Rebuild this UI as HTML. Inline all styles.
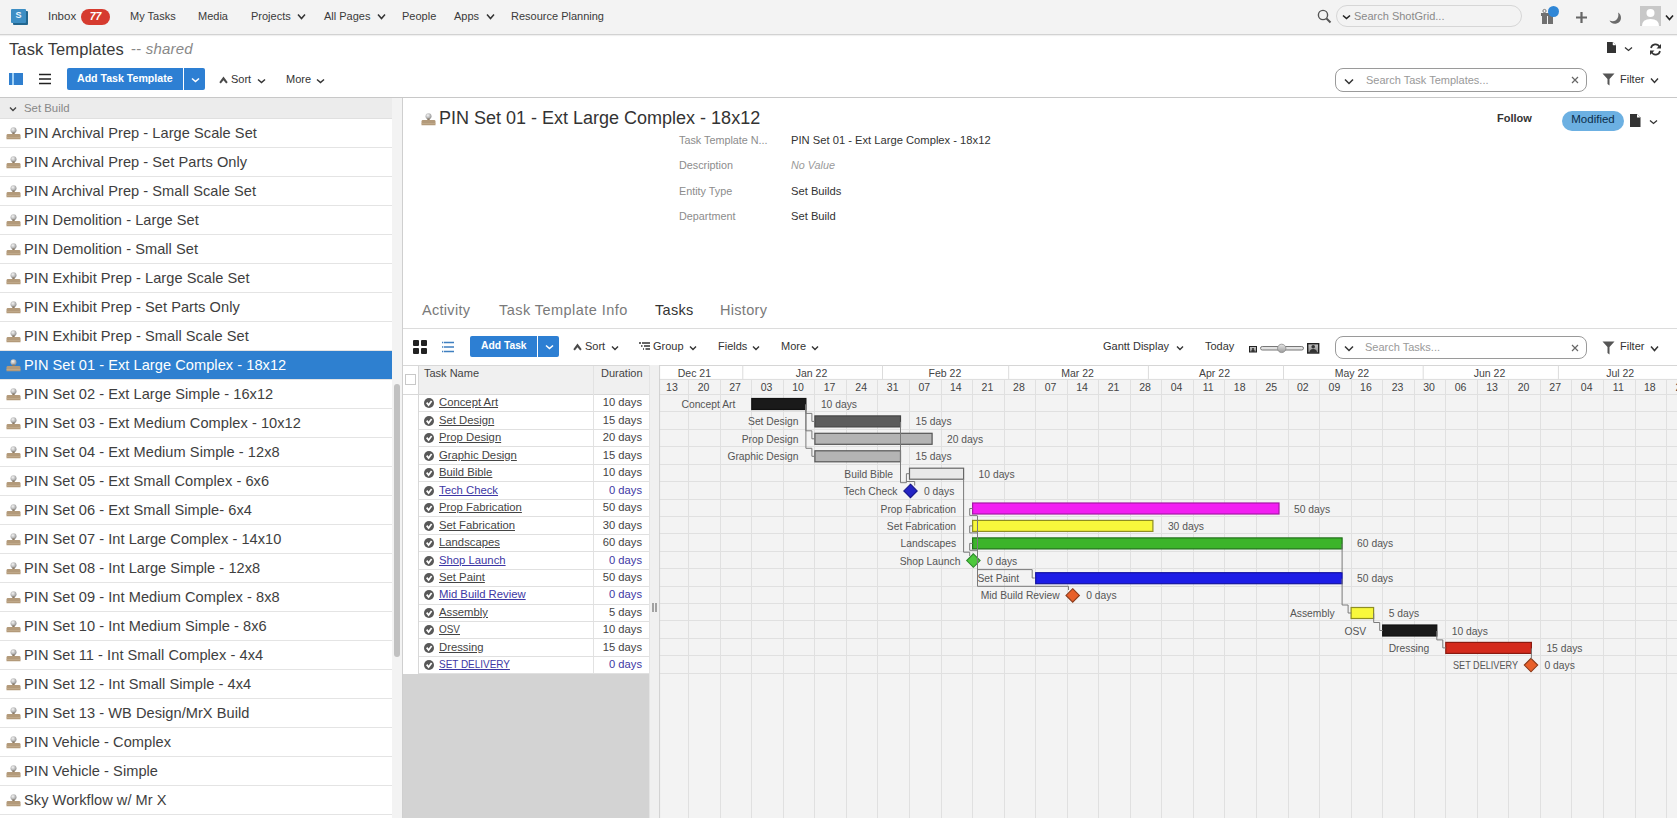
<!DOCTYPE html><html><head><meta charset="utf-8"><style>
*{box-sizing:border-box;margin:0;padding:0}
html,body{width:1677px;height:818px;overflow:hidden;background:#fff;font-family:"Liberation Sans",sans-serif;color:#333}
.a{position:absolute;white-space:nowrap}
.chev{position:absolute;width:7px;height:5px}
</style></head><body>

<div class="a" style="left:0;top:0;width:1677px;height:35px;background:#f3f3f3;border-bottom:1px solid #d2d2d2;box-shadow:0 1px 1px rgba(0,0,0,0.06)"></div>
<div class="a" style="left:12.5px;top:10.5px;width:15.5px;height:14.5px;background:#22668f;border-radius:1px"></div>
<div class="a" style="left:11px;top:9px;width:15px;height:14px;background:#3d8ec4;border-radius:1px;color:#eaf6ff;font-size:9px;line-height:13px;font-weight:700;text-align:center">S</div>
<div class="a" style="left:48px;top:11px;font-size:11.5px;line-height:11.5px;color:#3a3a3a;font-weight:400;font-style:normal;letter-spacing:0px;">Inbox</div>
<div class="a" style="left:81px;top:9px;width:29px;height:16px;background:#d63b2f;border-radius:8px;color:#fff;font-size:10.5px;line-height:15px;font-weight:700;font-style:italic;text-align:center">77</div>
<div class="a" style="left:130px;top:11px;font-size:11px;line-height:11px;color:#3a3a3a;font-weight:400;font-style:normal;letter-spacing:0px;">My Tasks</div>
<div class="a" style="left:198px;top:11px;font-size:11px;line-height:11px;color:#3a3a3a;font-weight:400;font-style:normal;letter-spacing:0px;">Media</div>
<div class="a" style="left:251px;top:11px;font-size:11px;line-height:11px;color:#3a3a3a;font-weight:400;font-style:normal;letter-spacing:0px;">Projects</div>
<svg class="a" style="left:297px;top:13px" width="9" height="7" viewBox="-1 -1 9 7"><path d="M0 0.5 L3.5 4.5 L7 0.5" fill="none" stroke="#333" stroke-width="1.5"/></svg>
<div class="a" style="left:324px;top:11px;font-size:11px;line-height:11px;color:#3a3a3a;font-weight:400;font-style:normal;letter-spacing:0px;">All Pages</div>
<svg class="a" style="left:377px;top:13px" width="9" height="7" viewBox="-1 -1 9 7"><path d="M0 0.5 L3.5 4.5 L7 0.5" fill="none" stroke="#333" stroke-width="1.5"/></svg>
<div class="a" style="left:402px;top:11px;font-size:11px;line-height:11px;color:#3a3a3a;font-weight:400;font-style:normal;letter-spacing:0px;">People</div>
<div class="a" style="left:454px;top:11px;font-size:11px;line-height:11px;color:#3a3a3a;font-weight:400;font-style:normal;letter-spacing:0px;">Apps</div>
<svg class="a" style="left:486px;top:13px" width="9" height="7" viewBox="-1 -1 9 7"><path d="M0 0.5 L3.5 4.5 L7 0.5" fill="none" stroke="#333" stroke-width="1.5"/></svg>
<div class="a" style="left:511px;top:11px;font-size:11px;line-height:11px;color:#3a3a3a;font-weight:400;font-style:normal;letter-spacing:0px;">Resource Planning</div>
<svg class="a" style="left:1317px;top:9px" width="16" height="16" viewBox="0 0 16 16"><circle cx="6" cy="6" r="4.6" fill="none" stroke="#555" stroke-width="1.4"/><path d="M9.5 9.5 L13.5 13.5" stroke="#555" stroke-width="2"/></svg>
<div class="a" style="left:1336px;top:5px;width:186px;height:22px;border:1px solid #d6d6d6;border-radius:11px;background:#f3f3f3"></div>
<svg class="a" style="left:1342px;top:14px" width="9" height="6" viewBox="-1 -1 9 6"><path d="M0 0.5 L3.5 3.5 L7 0.5" fill="none" stroke="#222" stroke-width="1.6"/></svg>
<div class="a" style="left:1354px;top:11px;font-size:11px;line-height:11px;color:#8a8a8a;font-weight:400;font-style:normal;letter-spacing:0px;">Search ShotGrid...</div>
<svg class="a" style="left:1540px;top:8px" width="20" height="18" viewBox="0 0 20 18"><rect x="2" y="7" width="5" height="9" fill="#707070"/><rect x="8" y="7" width="5" height="9" fill="#707070"/><rect x="1" y="5" width="13" height="3" fill="#707070"/><circle cx="4.5" cy="3" r="1.6" fill="none" stroke="#777" stroke-width="1"/></svg>
<div class="a" style="left:1548px;top:6px;width:11px;height:11px;border-radius:50%;background:#2f86d6"></div>
<svg class="a" style="left:1575px;top:11px" width="13" height="13" viewBox="0 0 13 13"><path d="M6.5 1 V12 M1 6.5 H12" stroke="#666" stroke-width="2.2"/></svg>
<svg class="a" style="left:1608px;top:11px" width="15" height="14" viewBox="0 0 15 14"><path d="M10 1.5 C14 3.5 14.5 11 8.5 12.5 C5 13.3 2.5 11.5 1.5 9.5 C3.5 10.5 6 10.5 7.5 9.5 C10 8 11 4.5 10 1.5 Z" fill="#6a6a6a"/></svg>
<div class="a" style="left:1640px;top:6px;width:21px;height:20px;background:#c8c8c8;overflow:hidden"><svg width="21" height="20" viewBox="0 0 21 20"><circle cx="10.5" cy="7" r="4" fill="#fff"/><path d="M2 20 Q2 13 10.5 13 Q19 13 19 20 Z" fill="#fff"/></svg></div>
<svg class="a" style="left:1665px;top:14px" width="9" height="7" viewBox="-1 -1 9 7"><path d="M0 0.5 L3.5 4.5 L7 0.5" fill="none" stroke="#222" stroke-width="1.6"/></svg>
<div class="a" style="left:9px;top:41px;font-size:16.5px;line-height:16.5px;color:#3a3a3a;font-weight:400;font-style:normal;letter-spacing:0.1px;">Task Templates</div>
<div class="a" style="left:131px;top:41px;font-size:15px;line-height:15px;color:#888;font-weight:400;font-style:normal;letter-spacing:0.2px;">-- <i>shared</i></div>
<svg class="a" style="left:1607px;top:42px" width="10" height="11" viewBox="0 0 10 11"><path d="M0 0 H6 L9 3 V11 H0 Z" fill="#333"/><path d="M6 0 V3 H9" fill="#fff" stroke="#fff" stroke-width="0.5"/></svg>
<svg class="a" style="left:1624px;top:46px" width="9" height="6" viewBox="-1 -1 9 6"><path d="M0 0.5 L3.5 3.5 L7 0.5" fill="none" stroke="#333" stroke-width="1.3"/></svg>
<svg class="a" style="left:1649px;top:43px" width="13" height="13" viewBox="0 0 13 13"><path d="M2 5 A4.5 4.5 0 0 1 10.5 4" fill="none" stroke="#333" stroke-width="1.6"/><path d="M12 1 V5.5 H7.5 Z" fill="#333"/><path d="M11 8 A4.5 4.5 0 0 1 2.5 9" fill="none" stroke="#333" stroke-width="1.6"/><path d="M1 12 V7.5 H5.5 Z" fill="#333"/></svg>
<div class="a" style="left:9px;top:73px;width:14px;height:12px;background:#2f7fcf"></div>
<div class="a" style="left:12px;top:73px;width:1.5px;height:12px;background:#9fd0f5"></div>
<svg class="a" style="left:38px;top:73px" width="14" height="12" viewBox="0 0 14 12"><path d="M1 1.5 H13 M1 6 H13 M1 10.5 H13" stroke="#222" stroke-width="1.6"/></svg>
<div class="a" style="left:67px;top:68px;width:138px;height:22px;background:#2d7fd3;border-radius:2px"></div>
<div class="a" style="left:183px;top:68px;width:1px;height:22px;background:#fff"></div>
<div class="a" style="left:77px;top:73px;font-size:10.6px;line-height:10.6px;color:#fff;font-weight:700;font-style:normal;letter-spacing:0px;">Add Task Template</div>
<svg class="a" style="left:191px;top:77px" width="9" height="6" viewBox="-1 -1 9 6"><path d="M0 0.5 L3.5 3.5 L7 0.5" fill="none" stroke="#fff" stroke-width="1.6"/></svg>
<svg class="a" style="left:219px;top:76px" width="9" height="8" viewBox="0 0 9 8"><path d="M0.3 6.2 L4.5 0.5 L8.7 6.2 L7.2 7.6 L4.5 4.2 L1.8 7.6 Z" fill="#4a4a4a"/></svg>
<div class="a" style="left:231px;top:74px;font-size:11px;line-height:11px;color:#333;font-weight:400;font-style:normal;letter-spacing:0px;">Sort</div>
<svg class="a" style="left:257px;top:78px" width="9" height="6" viewBox="-1 -1 9 6"><path d="M0 0.5 L3.5 3.5 L7 0.5" fill="none" stroke="#333" stroke-width="1.5"/></svg>
<div class="a" style="left:286px;top:74px;font-size:11px;line-height:11px;color:#333;font-weight:400;font-style:normal;letter-spacing:0px;">More</div>
<svg class="a" style="left:316px;top:78px" width="9" height="6" viewBox="-1 -1 9 6"><path d="M0 0.5 L3.5 3.5 L7 0.5" fill="none" stroke="#333" stroke-width="1.5"/></svg>
<div class="a" style="left:1335px;top:68px;width:252px;height:24px;border:1px solid #9a9a9a;border-radius:8px;background:#fff"></div>
<svg class="a" style="left:1344px;top:78px" width="10" height="7" viewBox="-1 -1 10 7"><path d="M0 0.5 L4.0 4.5 L8 0.5" fill="none" stroke="#333" stroke-width="1.5"/></svg>
<div class="a" style="left:1366px;top:75px;font-size:11px;line-height:11px;color:#999;font-weight:400;font-style:normal;letter-spacing:0px;">Search Task Templates...</div>
<svg class="a" style="left:1571px;top:76px" width="8" height="8" viewBox="0 0 8 8"><path d="M1 1 L7 7 M7 1 L1 7" stroke="#666" stroke-width="1.2"/></svg>
<svg class="a" style="left:1602px;top:73px" width="13" height="13" viewBox="0 0 13 13"><path d="M0.5 0.5 H12.5 L7.5 6 V12.5 L5.5 11 V6 Z" fill="#555"/></svg>
<div class="a" style="left:1620px;top:74px;font-size:11px;line-height:11px;color:#333;font-weight:400;font-style:normal;letter-spacing:0px;">Filter</div>
<svg class="a" style="left:1650px;top:77px" width="9" height="7" viewBox="-1 -1 9 7"><path d="M0 0.5 L3.5 4.5 L7 0.5" fill="none" stroke="#333" stroke-width="1.4"/></svg>
<div class="a" style="left:0;top:97px;width:1677px;height:1px;background:#c8c8c8"></div>
<div class="a" style="left:0;top:98px;width:392px;height:21px;background:#ececec;border-bottom:1px solid #e0e0e0"></div>
<svg class="a" style="left:9px;top:106px" width="8" height="6" viewBox="-1 -1 8 6"><path d="M0 0.5 L3.0 3.5 L6 0.5" fill="none" stroke="#444" stroke-width="1.4"/></svg>
<div class="a" style="left:24px;top:103px;font-size:11.4px;line-height:11.4px;color:#888;font-weight:400;font-style:normal;letter-spacing:0px;">Set Build</div>
<div class="a" style="left:392px;top:98px;width:10px;height:720px;background:#f3f3f3"></div>
<div class="a" style="left:394px;top:384px;width:6px;height:273px;background:#c1c1c1;border-radius:3px"></div>
<div class="a" style="left:402px;top:98px;width:1px;height:720px;background:#cfcfcf"></div>
<div class="a" style="left:0;top:119px;width:392px;height:29px;background:#fff;border-bottom:1px solid #e4e4e4"></div>
<svg class="a" style="left:6px;top:127px" width="15" height="13" viewBox="0 0 15 13"><defs><radialGradient id="g" cx="0.4" cy="0.35" r="0.6"><stop offset="0" stop-color="#f4f4f4"/><stop offset="1" stop-color="#9a9a9a"/></radialGradient></defs><circle cx="7.5" cy="3.3" r="3" fill="url(#g)"/><rect x="6.3" y="5.5" width="2.4" height="2" fill="#8a7a66"/><path d="M1.5 7 H13.5 Q14.5 7 14.5 8.5 V12.3 H0.5 V8.5 Q0.5 7 1.5 7 Z" fill="#b39a7a"/><path d="M0.5 10.5 H14.5" stroke="#c8b294" stroke-width="0.6"/></svg>
<div class="a" style="left:24px;top:126px;font-size:14.6px;line-height:14.6px;color:#3e3e3e;font-weight:400;font-style:normal;letter-spacing:0.05px;">PIN Archival Prep - Large Scale Set</div>
<div class="a" style="left:0;top:148px;width:392px;height:29px;background:#fff;border-bottom:1px solid #e4e4e4"></div>
<svg class="a" style="left:6px;top:156px" width="15" height="13" viewBox="0 0 15 13"><defs><radialGradient id="g" cx="0.4" cy="0.35" r="0.6"><stop offset="0" stop-color="#f4f4f4"/><stop offset="1" stop-color="#9a9a9a"/></radialGradient></defs><circle cx="7.5" cy="3.3" r="3" fill="url(#g)"/><rect x="6.3" y="5.5" width="2.4" height="2" fill="#8a7a66"/><path d="M1.5 7 H13.5 Q14.5 7 14.5 8.5 V12.3 H0.5 V8.5 Q0.5 7 1.5 7 Z" fill="#b39a7a"/><path d="M0.5 10.5 H14.5" stroke="#c8b294" stroke-width="0.6"/></svg>
<div class="a" style="left:24px;top:155px;font-size:14.6px;line-height:14.6px;color:#3e3e3e;font-weight:400;font-style:normal;letter-spacing:0.05px;">PIN Archival Prep - Set Parts Only</div>
<div class="a" style="left:0;top:177px;width:392px;height:29px;background:#fff;border-bottom:1px solid #e4e4e4"></div>
<svg class="a" style="left:6px;top:185px" width="15" height="13" viewBox="0 0 15 13"><defs><radialGradient id="g" cx="0.4" cy="0.35" r="0.6"><stop offset="0" stop-color="#f4f4f4"/><stop offset="1" stop-color="#9a9a9a"/></radialGradient></defs><circle cx="7.5" cy="3.3" r="3" fill="url(#g)"/><rect x="6.3" y="5.5" width="2.4" height="2" fill="#8a7a66"/><path d="M1.5 7 H13.5 Q14.5 7 14.5 8.5 V12.3 H0.5 V8.5 Q0.5 7 1.5 7 Z" fill="#b39a7a"/><path d="M0.5 10.5 H14.5" stroke="#c8b294" stroke-width="0.6"/></svg>
<div class="a" style="left:24px;top:184px;font-size:14.6px;line-height:14.6px;color:#3e3e3e;font-weight:400;font-style:normal;letter-spacing:0.05px;">PIN Archival Prep - Small Scale Set</div>
<div class="a" style="left:0;top:206px;width:392px;height:29px;background:#fff;border-bottom:1px solid #e4e4e4"></div>
<svg class="a" style="left:6px;top:214px" width="15" height="13" viewBox="0 0 15 13"><defs><radialGradient id="g" cx="0.4" cy="0.35" r="0.6"><stop offset="0" stop-color="#f4f4f4"/><stop offset="1" stop-color="#9a9a9a"/></radialGradient></defs><circle cx="7.5" cy="3.3" r="3" fill="url(#g)"/><rect x="6.3" y="5.5" width="2.4" height="2" fill="#8a7a66"/><path d="M1.5 7 H13.5 Q14.5 7 14.5 8.5 V12.3 H0.5 V8.5 Q0.5 7 1.5 7 Z" fill="#b39a7a"/><path d="M0.5 10.5 H14.5" stroke="#c8b294" stroke-width="0.6"/></svg>
<div class="a" style="left:24px;top:213px;font-size:14.6px;line-height:14.6px;color:#3e3e3e;font-weight:400;font-style:normal;letter-spacing:0.05px;">PIN Demolition - Large Set</div>
<div class="a" style="left:0;top:235px;width:392px;height:29px;background:#fff;border-bottom:1px solid #e4e4e4"></div>
<svg class="a" style="left:6px;top:243px" width="15" height="13" viewBox="0 0 15 13"><defs><radialGradient id="g" cx="0.4" cy="0.35" r="0.6"><stop offset="0" stop-color="#f4f4f4"/><stop offset="1" stop-color="#9a9a9a"/></radialGradient></defs><circle cx="7.5" cy="3.3" r="3" fill="url(#g)"/><rect x="6.3" y="5.5" width="2.4" height="2" fill="#8a7a66"/><path d="M1.5 7 H13.5 Q14.5 7 14.5 8.5 V12.3 H0.5 V8.5 Q0.5 7 1.5 7 Z" fill="#b39a7a"/><path d="M0.5 10.5 H14.5" stroke="#c8b294" stroke-width="0.6"/></svg>
<div class="a" style="left:24px;top:242px;font-size:14.6px;line-height:14.6px;color:#3e3e3e;font-weight:400;font-style:normal;letter-spacing:0.05px;">PIN Demolition - Small Set</div>
<div class="a" style="left:0;top:264px;width:392px;height:29px;background:#fff;border-bottom:1px solid #e4e4e4"></div>
<svg class="a" style="left:6px;top:272px" width="15" height="13" viewBox="0 0 15 13"><defs><radialGradient id="g" cx="0.4" cy="0.35" r="0.6"><stop offset="0" stop-color="#f4f4f4"/><stop offset="1" stop-color="#9a9a9a"/></radialGradient></defs><circle cx="7.5" cy="3.3" r="3" fill="url(#g)"/><rect x="6.3" y="5.5" width="2.4" height="2" fill="#8a7a66"/><path d="M1.5 7 H13.5 Q14.5 7 14.5 8.5 V12.3 H0.5 V8.5 Q0.5 7 1.5 7 Z" fill="#b39a7a"/><path d="M0.5 10.5 H14.5" stroke="#c8b294" stroke-width="0.6"/></svg>
<div class="a" style="left:24px;top:271px;font-size:14.6px;line-height:14.6px;color:#3e3e3e;font-weight:400;font-style:normal;letter-spacing:0.05px;">PIN Exhibit Prep - Large Scale Set</div>
<div class="a" style="left:0;top:293px;width:392px;height:29px;background:#fff;border-bottom:1px solid #e4e4e4"></div>
<svg class="a" style="left:6px;top:301px" width="15" height="13" viewBox="0 0 15 13"><defs><radialGradient id="g" cx="0.4" cy="0.35" r="0.6"><stop offset="0" stop-color="#f4f4f4"/><stop offset="1" stop-color="#9a9a9a"/></radialGradient></defs><circle cx="7.5" cy="3.3" r="3" fill="url(#g)"/><rect x="6.3" y="5.5" width="2.4" height="2" fill="#8a7a66"/><path d="M1.5 7 H13.5 Q14.5 7 14.5 8.5 V12.3 H0.5 V8.5 Q0.5 7 1.5 7 Z" fill="#b39a7a"/><path d="M0.5 10.5 H14.5" stroke="#c8b294" stroke-width="0.6"/></svg>
<div class="a" style="left:24px;top:300px;font-size:14.6px;line-height:14.6px;color:#3e3e3e;font-weight:400;font-style:normal;letter-spacing:0.05px;">PIN Exhibit Prep - Set Parts Only</div>
<div class="a" style="left:0;top:322px;width:392px;height:29px;background:#fff;border-bottom:1px solid #e4e4e4"></div>
<svg class="a" style="left:6px;top:330px" width="15" height="13" viewBox="0 0 15 13"><defs><radialGradient id="g" cx="0.4" cy="0.35" r="0.6"><stop offset="0" stop-color="#f4f4f4"/><stop offset="1" stop-color="#9a9a9a"/></radialGradient></defs><circle cx="7.5" cy="3.3" r="3" fill="url(#g)"/><rect x="6.3" y="5.5" width="2.4" height="2" fill="#8a7a66"/><path d="M1.5 7 H13.5 Q14.5 7 14.5 8.5 V12.3 H0.5 V8.5 Q0.5 7 1.5 7 Z" fill="#b39a7a"/><path d="M0.5 10.5 H14.5" stroke="#c8b294" stroke-width="0.6"/></svg>
<div class="a" style="left:24px;top:329px;font-size:14.6px;line-height:14.6px;color:#3e3e3e;font-weight:400;font-style:normal;letter-spacing:0.05px;">PIN Exhibit Prep - Small Scale Set</div>
<div class="a" style="left:0;top:351px;width:392px;height:29px;background:#2e80d0;border-bottom:1px solid #e4e4e4"></div>
<svg class="a" style="left:6px;top:359px" width="15" height="13" viewBox="0 0 15 13"><defs><radialGradient id="g" cx="0.4" cy="0.35" r="0.6"><stop offset="0" stop-color="#f4f4f4"/><stop offset="1" stop-color="#9a9a9a"/></radialGradient></defs><circle cx="7.5" cy="3.3" r="3" fill="url(#g)"/><rect x="6.3" y="5.5" width="2.4" height="2" fill="#8a7a66"/><path d="M1.5 7 H13.5 Q14.5 7 14.5 8.5 V12.3 H0.5 V8.5 Q0.5 7 1.5 7 Z" fill="#b39a7a"/><path d="M0.5 10.5 H14.5" stroke="#c8b294" stroke-width="0.6"/></svg>
<div class="a" style="left:24px;top:358px;font-size:14.6px;line-height:14.6px;color:#fff;font-weight:400;font-style:normal;letter-spacing:0.05px;">PIN Set 01 - Ext Large Complex - 18x12</div>
<div class="a" style="left:0;top:380px;width:392px;height:29px;background:#fff;border-bottom:1px solid #e4e4e4"></div>
<svg class="a" style="left:6px;top:388px" width="15" height="13" viewBox="0 0 15 13"><defs><radialGradient id="g" cx="0.4" cy="0.35" r="0.6"><stop offset="0" stop-color="#f4f4f4"/><stop offset="1" stop-color="#9a9a9a"/></radialGradient></defs><circle cx="7.5" cy="3.3" r="3" fill="url(#g)"/><rect x="6.3" y="5.5" width="2.4" height="2" fill="#8a7a66"/><path d="M1.5 7 H13.5 Q14.5 7 14.5 8.5 V12.3 H0.5 V8.5 Q0.5 7 1.5 7 Z" fill="#b39a7a"/><path d="M0.5 10.5 H14.5" stroke="#c8b294" stroke-width="0.6"/></svg>
<div class="a" style="left:24px;top:387px;font-size:14.6px;line-height:14.6px;color:#3e3e3e;font-weight:400;font-style:normal;letter-spacing:0.05px;">PIN Set 02 - Ext Large Simple - 16x12</div>
<div class="a" style="left:0;top:409px;width:392px;height:29px;background:#fff;border-bottom:1px solid #e4e4e4"></div>
<svg class="a" style="left:6px;top:417px" width="15" height="13" viewBox="0 0 15 13"><defs><radialGradient id="g" cx="0.4" cy="0.35" r="0.6"><stop offset="0" stop-color="#f4f4f4"/><stop offset="1" stop-color="#9a9a9a"/></radialGradient></defs><circle cx="7.5" cy="3.3" r="3" fill="url(#g)"/><rect x="6.3" y="5.5" width="2.4" height="2" fill="#8a7a66"/><path d="M1.5 7 H13.5 Q14.5 7 14.5 8.5 V12.3 H0.5 V8.5 Q0.5 7 1.5 7 Z" fill="#b39a7a"/><path d="M0.5 10.5 H14.5" stroke="#c8b294" stroke-width="0.6"/></svg>
<div class="a" style="left:24px;top:416px;font-size:14.6px;line-height:14.6px;color:#3e3e3e;font-weight:400;font-style:normal;letter-spacing:0.05px;">PIN Set 03 - Ext Medium Complex - 10x12</div>
<div class="a" style="left:0;top:438px;width:392px;height:29px;background:#fff;border-bottom:1px solid #e4e4e4"></div>
<svg class="a" style="left:6px;top:446px" width="15" height="13" viewBox="0 0 15 13"><defs><radialGradient id="g" cx="0.4" cy="0.35" r="0.6"><stop offset="0" stop-color="#f4f4f4"/><stop offset="1" stop-color="#9a9a9a"/></radialGradient></defs><circle cx="7.5" cy="3.3" r="3" fill="url(#g)"/><rect x="6.3" y="5.5" width="2.4" height="2" fill="#8a7a66"/><path d="M1.5 7 H13.5 Q14.5 7 14.5 8.5 V12.3 H0.5 V8.5 Q0.5 7 1.5 7 Z" fill="#b39a7a"/><path d="M0.5 10.5 H14.5" stroke="#c8b294" stroke-width="0.6"/></svg>
<div class="a" style="left:24px;top:445px;font-size:14.6px;line-height:14.6px;color:#3e3e3e;font-weight:400;font-style:normal;letter-spacing:0.05px;">PIN Set 04 - Ext Medium Simple - 12x8</div>
<div class="a" style="left:0;top:467px;width:392px;height:29px;background:#fff;border-bottom:1px solid #e4e4e4"></div>
<svg class="a" style="left:6px;top:475px" width="15" height="13" viewBox="0 0 15 13"><defs><radialGradient id="g" cx="0.4" cy="0.35" r="0.6"><stop offset="0" stop-color="#f4f4f4"/><stop offset="1" stop-color="#9a9a9a"/></radialGradient></defs><circle cx="7.5" cy="3.3" r="3" fill="url(#g)"/><rect x="6.3" y="5.5" width="2.4" height="2" fill="#8a7a66"/><path d="M1.5 7 H13.5 Q14.5 7 14.5 8.5 V12.3 H0.5 V8.5 Q0.5 7 1.5 7 Z" fill="#b39a7a"/><path d="M0.5 10.5 H14.5" stroke="#c8b294" stroke-width="0.6"/></svg>
<div class="a" style="left:24px;top:474px;font-size:14.6px;line-height:14.6px;color:#3e3e3e;font-weight:400;font-style:normal;letter-spacing:0.05px;">PIN Set 05 - Ext Small Complex - 6x6</div>
<div class="a" style="left:0;top:496px;width:392px;height:29px;background:#fff;border-bottom:1px solid #e4e4e4"></div>
<svg class="a" style="left:6px;top:504px" width="15" height="13" viewBox="0 0 15 13"><defs><radialGradient id="g" cx="0.4" cy="0.35" r="0.6"><stop offset="0" stop-color="#f4f4f4"/><stop offset="1" stop-color="#9a9a9a"/></radialGradient></defs><circle cx="7.5" cy="3.3" r="3" fill="url(#g)"/><rect x="6.3" y="5.5" width="2.4" height="2" fill="#8a7a66"/><path d="M1.5 7 H13.5 Q14.5 7 14.5 8.5 V12.3 H0.5 V8.5 Q0.5 7 1.5 7 Z" fill="#b39a7a"/><path d="M0.5 10.5 H14.5" stroke="#c8b294" stroke-width="0.6"/></svg>
<div class="a" style="left:24px;top:503px;font-size:14.6px;line-height:14.6px;color:#3e3e3e;font-weight:400;font-style:normal;letter-spacing:0.05px;">PIN Set 06 - Ext Small Simple- 6x4</div>
<div class="a" style="left:0;top:525px;width:392px;height:29px;background:#fff;border-bottom:1px solid #e4e4e4"></div>
<svg class="a" style="left:6px;top:533px" width="15" height="13" viewBox="0 0 15 13"><defs><radialGradient id="g" cx="0.4" cy="0.35" r="0.6"><stop offset="0" stop-color="#f4f4f4"/><stop offset="1" stop-color="#9a9a9a"/></radialGradient></defs><circle cx="7.5" cy="3.3" r="3" fill="url(#g)"/><rect x="6.3" y="5.5" width="2.4" height="2" fill="#8a7a66"/><path d="M1.5 7 H13.5 Q14.5 7 14.5 8.5 V12.3 H0.5 V8.5 Q0.5 7 1.5 7 Z" fill="#b39a7a"/><path d="M0.5 10.5 H14.5" stroke="#c8b294" stroke-width="0.6"/></svg>
<div class="a" style="left:24px;top:532px;font-size:14.6px;line-height:14.6px;color:#3e3e3e;font-weight:400;font-style:normal;letter-spacing:0.05px;">PIN Set 07 - Int Large Complex - 14x10</div>
<div class="a" style="left:0;top:554px;width:392px;height:29px;background:#fff;border-bottom:1px solid #e4e4e4"></div>
<svg class="a" style="left:6px;top:562px" width="15" height="13" viewBox="0 0 15 13"><defs><radialGradient id="g" cx="0.4" cy="0.35" r="0.6"><stop offset="0" stop-color="#f4f4f4"/><stop offset="1" stop-color="#9a9a9a"/></radialGradient></defs><circle cx="7.5" cy="3.3" r="3" fill="url(#g)"/><rect x="6.3" y="5.5" width="2.4" height="2" fill="#8a7a66"/><path d="M1.5 7 H13.5 Q14.5 7 14.5 8.5 V12.3 H0.5 V8.5 Q0.5 7 1.5 7 Z" fill="#b39a7a"/><path d="M0.5 10.5 H14.5" stroke="#c8b294" stroke-width="0.6"/></svg>
<div class="a" style="left:24px;top:561px;font-size:14.6px;line-height:14.6px;color:#3e3e3e;font-weight:400;font-style:normal;letter-spacing:0.05px;">PIN Set 08 - Int Large Simple - 12x8</div>
<div class="a" style="left:0;top:583px;width:392px;height:29px;background:#fff;border-bottom:1px solid #e4e4e4"></div>
<svg class="a" style="left:6px;top:591px" width="15" height="13" viewBox="0 0 15 13"><defs><radialGradient id="g" cx="0.4" cy="0.35" r="0.6"><stop offset="0" stop-color="#f4f4f4"/><stop offset="1" stop-color="#9a9a9a"/></radialGradient></defs><circle cx="7.5" cy="3.3" r="3" fill="url(#g)"/><rect x="6.3" y="5.5" width="2.4" height="2" fill="#8a7a66"/><path d="M1.5 7 H13.5 Q14.5 7 14.5 8.5 V12.3 H0.5 V8.5 Q0.5 7 1.5 7 Z" fill="#b39a7a"/><path d="M0.5 10.5 H14.5" stroke="#c8b294" stroke-width="0.6"/></svg>
<div class="a" style="left:24px;top:590px;font-size:14.6px;line-height:14.6px;color:#3e3e3e;font-weight:400;font-style:normal;letter-spacing:0.05px;">PIN Set 09 - Int Medium Complex - 8x8</div>
<div class="a" style="left:0;top:612px;width:392px;height:29px;background:#fff;border-bottom:1px solid #e4e4e4"></div>
<svg class="a" style="left:6px;top:620px" width="15" height="13" viewBox="0 0 15 13"><defs><radialGradient id="g" cx="0.4" cy="0.35" r="0.6"><stop offset="0" stop-color="#f4f4f4"/><stop offset="1" stop-color="#9a9a9a"/></radialGradient></defs><circle cx="7.5" cy="3.3" r="3" fill="url(#g)"/><rect x="6.3" y="5.5" width="2.4" height="2" fill="#8a7a66"/><path d="M1.5 7 H13.5 Q14.5 7 14.5 8.5 V12.3 H0.5 V8.5 Q0.5 7 1.5 7 Z" fill="#b39a7a"/><path d="M0.5 10.5 H14.5" stroke="#c8b294" stroke-width="0.6"/></svg>
<div class="a" style="left:24px;top:619px;font-size:14.6px;line-height:14.6px;color:#3e3e3e;font-weight:400;font-style:normal;letter-spacing:0.05px;">PIN Set 10 - Int Medium Simple - 8x6</div>
<div class="a" style="left:0;top:641px;width:392px;height:29px;background:#fff;border-bottom:1px solid #e4e4e4"></div>
<svg class="a" style="left:6px;top:649px" width="15" height="13" viewBox="0 0 15 13"><defs><radialGradient id="g" cx="0.4" cy="0.35" r="0.6"><stop offset="0" stop-color="#f4f4f4"/><stop offset="1" stop-color="#9a9a9a"/></radialGradient></defs><circle cx="7.5" cy="3.3" r="3" fill="url(#g)"/><rect x="6.3" y="5.5" width="2.4" height="2" fill="#8a7a66"/><path d="M1.5 7 H13.5 Q14.5 7 14.5 8.5 V12.3 H0.5 V8.5 Q0.5 7 1.5 7 Z" fill="#b39a7a"/><path d="M0.5 10.5 H14.5" stroke="#c8b294" stroke-width="0.6"/></svg>
<div class="a" style="left:24px;top:648px;font-size:14.6px;line-height:14.6px;color:#3e3e3e;font-weight:400;font-style:normal;letter-spacing:0.05px;">PIN Set 11 - Int Small Complex - 4x4</div>
<div class="a" style="left:0;top:670px;width:392px;height:29px;background:#fff;border-bottom:1px solid #e4e4e4"></div>
<svg class="a" style="left:6px;top:678px" width="15" height="13" viewBox="0 0 15 13"><defs><radialGradient id="g" cx="0.4" cy="0.35" r="0.6"><stop offset="0" stop-color="#f4f4f4"/><stop offset="1" stop-color="#9a9a9a"/></radialGradient></defs><circle cx="7.5" cy="3.3" r="3" fill="url(#g)"/><rect x="6.3" y="5.5" width="2.4" height="2" fill="#8a7a66"/><path d="M1.5 7 H13.5 Q14.5 7 14.5 8.5 V12.3 H0.5 V8.5 Q0.5 7 1.5 7 Z" fill="#b39a7a"/><path d="M0.5 10.5 H14.5" stroke="#c8b294" stroke-width="0.6"/></svg>
<div class="a" style="left:24px;top:677px;font-size:14.6px;line-height:14.6px;color:#3e3e3e;font-weight:400;font-style:normal;letter-spacing:0.05px;">PIN Set 12 - Int Small Simple - 4x4</div>
<div class="a" style="left:0;top:699px;width:392px;height:29px;background:#fff;border-bottom:1px solid #e4e4e4"></div>
<svg class="a" style="left:6px;top:707px" width="15" height="13" viewBox="0 0 15 13"><defs><radialGradient id="g" cx="0.4" cy="0.35" r="0.6"><stop offset="0" stop-color="#f4f4f4"/><stop offset="1" stop-color="#9a9a9a"/></radialGradient></defs><circle cx="7.5" cy="3.3" r="3" fill="url(#g)"/><rect x="6.3" y="5.5" width="2.4" height="2" fill="#8a7a66"/><path d="M1.5 7 H13.5 Q14.5 7 14.5 8.5 V12.3 H0.5 V8.5 Q0.5 7 1.5 7 Z" fill="#b39a7a"/><path d="M0.5 10.5 H14.5" stroke="#c8b294" stroke-width="0.6"/></svg>
<div class="a" style="left:24px;top:706px;font-size:14.6px;line-height:14.6px;color:#3e3e3e;font-weight:400;font-style:normal;letter-spacing:0.05px;">PIN Set 13 - WB Design/MrX Build</div>
<div class="a" style="left:0;top:728px;width:392px;height:29px;background:#fff;border-bottom:1px solid #e4e4e4"></div>
<svg class="a" style="left:6px;top:736px" width="15" height="13" viewBox="0 0 15 13"><defs><radialGradient id="g" cx="0.4" cy="0.35" r="0.6"><stop offset="0" stop-color="#f4f4f4"/><stop offset="1" stop-color="#9a9a9a"/></radialGradient></defs><circle cx="7.5" cy="3.3" r="3" fill="url(#g)"/><rect x="6.3" y="5.5" width="2.4" height="2" fill="#8a7a66"/><path d="M1.5 7 H13.5 Q14.5 7 14.5 8.5 V12.3 H0.5 V8.5 Q0.5 7 1.5 7 Z" fill="#b39a7a"/><path d="M0.5 10.5 H14.5" stroke="#c8b294" stroke-width="0.6"/></svg>
<div class="a" style="left:24px;top:735px;font-size:14.6px;line-height:14.6px;color:#3e3e3e;font-weight:400;font-style:normal;letter-spacing:0.05px;">PIN Vehicle - Complex</div>
<div class="a" style="left:0;top:757px;width:392px;height:29px;background:#fff;border-bottom:1px solid #e4e4e4"></div>
<svg class="a" style="left:6px;top:765px" width="15" height="13" viewBox="0 0 15 13"><defs><radialGradient id="g" cx="0.4" cy="0.35" r="0.6"><stop offset="0" stop-color="#f4f4f4"/><stop offset="1" stop-color="#9a9a9a"/></radialGradient></defs><circle cx="7.5" cy="3.3" r="3" fill="url(#g)"/><rect x="6.3" y="5.5" width="2.4" height="2" fill="#8a7a66"/><path d="M1.5 7 H13.5 Q14.5 7 14.5 8.5 V12.3 H0.5 V8.5 Q0.5 7 1.5 7 Z" fill="#b39a7a"/><path d="M0.5 10.5 H14.5" stroke="#c8b294" stroke-width="0.6"/></svg>
<div class="a" style="left:24px;top:764px;font-size:14.6px;line-height:14.6px;color:#3e3e3e;font-weight:400;font-style:normal;letter-spacing:0.05px;">PIN Vehicle - Simple</div>
<div class="a" style="left:0;top:786px;width:392px;height:29px;background:#fff;border-bottom:1px solid #e4e4e4"></div>
<svg class="a" style="left:6px;top:794px" width="15" height="13" viewBox="0 0 15 13"><defs><radialGradient id="g" cx="0.4" cy="0.35" r="0.6"><stop offset="0" stop-color="#f4f4f4"/><stop offset="1" stop-color="#9a9a9a"/></radialGradient></defs><circle cx="7.5" cy="3.3" r="3" fill="url(#g)"/><rect x="6.3" y="5.5" width="2.4" height="2" fill="#8a7a66"/><path d="M1.5 7 H13.5 Q14.5 7 14.5 8.5 V12.3 H0.5 V8.5 Q0.5 7 1.5 7 Z" fill="#b39a7a"/><path d="M0.5 10.5 H14.5" stroke="#c8b294" stroke-width="0.6"/></svg>
<div class="a" style="left:24px;top:793px;font-size:14.6px;line-height:14.6px;color:#3e3e3e;font-weight:400;font-style:normal;letter-spacing:0.05px;">Sky Workflow w/ Mr X</div>
<svg class="a" style="left:421px;top:113px" width="15" height="13" viewBox="0 0 15 13"><defs><radialGradient id="g" cx="0.4" cy="0.35" r="0.6"><stop offset="0" stop-color="#f4f4f4"/><stop offset="1" stop-color="#9a9a9a"/></radialGradient></defs><circle cx="7.5" cy="3.3" r="3" fill="url(#g)"/><rect x="6.3" y="5.5" width="2.4" height="2" fill="#8a7a66"/><path d="M1.5 7 H13.5 Q14.5 7 14.5 8.5 V12.3 H0.5 V8.5 Q0.5 7 1.5 7 Z" fill="#b39a7a"/><path d="M0.5 10.5 H14.5" stroke="#c8b294" stroke-width="0.6"/></svg>
<div class="a" style="left:439px;top:109px;font-size:18px;line-height:18px;color:#333;font-weight:400;font-style:normal;letter-spacing:0px;">PIN Set 01 - Ext Large Complex - 18x12</div>
<div class="a" style="left:1497px;top:113px;font-size:11px;line-height:11px;color:#333;font-weight:700;font-style:normal;letter-spacing:0px;">Follow</div>
<div class="a" style="left:1562px;top:111px;width:62px;height:20px;background:#6cb0e2;border-radius:10px;color:#0b2d4a;font-size:11.5px;line-height:17px;text-align:center">Modified</div>
<svg class="a" style="left:1630px;top:114px" width="11" height="13" viewBox="0 0 11 13"><path d="M0 0 H7 L10.5 3.5 V13 H0 Z" fill="#333"/><path d="M7 0 V3.5 H10.5" fill="#fff"/></svg>
<svg class="a" style="left:1649px;top:119px" width="9" height="6" viewBox="-1 -1 9 6"><path d="M0 0.5 L3.5 3.5 L7 0.5" fill="none" stroke="#333" stroke-width="1.3"/></svg>
<div class="a" style="left:679px;top:135.0px;font-size:10.8px;line-height:10.8px;color:#8c8c8c;font-weight:400;font-style:normal;letter-spacing:0px;">Task Template N...</div>
<div class="a" style="left:791px;top:135.0px;font-size:11.2px;line-height:11.2px;color:#333;font-weight:400;font-style:normal;letter-spacing:0px;">PIN Set 01 - Ext Large Complex - 18x12</div>
<div class="a" style="left:679px;top:160.4px;font-size:10.8px;line-height:10.8px;color:#8c8c8c;font-weight:400;font-style:normal;letter-spacing:0px;">Description</div>
<div class="a" style="left:791px;top:160.4px;font-size:10.8px;line-height:10.8px;color:#9a9a9a;font-weight:400;font-style:italic;letter-spacing:0px;">No Value</div>
<div class="a" style="left:679px;top:185.8px;font-size:10.8px;line-height:10.8px;color:#8c8c8c;font-weight:400;font-style:normal;letter-spacing:0px;">Entity Type</div>
<div class="a" style="left:791px;top:185.8px;font-size:11.2px;line-height:11.2px;color:#333;font-weight:400;font-style:normal;letter-spacing:0px;">Set Builds</div>
<div class="a" style="left:679px;top:211.2px;font-size:10.8px;line-height:10.8px;color:#8c8c8c;font-weight:400;font-style:normal;letter-spacing:0px;">Department</div>
<div class="a" style="left:791px;top:211.2px;font-size:11.2px;line-height:11.2px;color:#333;font-weight:400;font-style:normal;letter-spacing:0px;">Set Build</div>
<div class="a" style="left:422px;top:303px;font-size:14.5px;line-height:14.5px;color:#7a7a7a;font-weight:400;font-style:normal;letter-spacing:0.3px;">Activity</div>
<div class="a" style="left:499px;top:303px;font-size:14.5px;line-height:14.5px;color:#7a7a7a;font-weight:400;font-style:normal;letter-spacing:0.45px;">Task Template Info</div>
<div class="a" style="left:655px;top:303px;font-size:14.5px;line-height:14.5px;color:#333;font-weight:400;font-style:normal;letter-spacing:0.3px;">Tasks</div>
<div class="a" style="left:720px;top:303px;font-size:14.5px;line-height:14.5px;color:#7a7a7a;font-weight:400;font-style:normal;letter-spacing:0.3px;">History</div>
<div class="a" style="left:403px;top:328px;width:1274px;height:1px;background:#dcdcdc"></div>
<svg class="a" style="left:413px;top:340px" width="14" height="14" viewBox="0 0 14 14"><rect x="0" y="0" width="6" height="6" rx="1" fill="#222"/><rect x="8" y="0" width="6" height="6" rx="1" fill="#222"/><rect x="0" y="8" width="6" height="6" rx="1" fill="#222"/><rect x="8" y="8" width="6" height="6" rx="1" fill="#222"/></svg>
<svg class="a" style="left:441px;top:341px" width="14" height="12" viewBox="0 0 14 12"><path d="M1 1.5 H2.3 M3 1.5 H13 M1 6 H2.3 M3 6 H13 M1 10.5 H2.3 M3 10.5 H13" stroke="#3f7fc0" stroke-width="1.7"/></svg>
<div class="a" style="left:470px;top:336px;width:89px;height:21px;background:#2d7fd3;border-radius:2px"></div>
<div class="a" style="left:537px;top:336px;width:1px;height:21px;background:#fff"></div>
<div class="a" style="left:481px;top:341px;font-size:10.3px;line-height:10.3px;color:#fff;font-weight:700;font-style:normal;letter-spacing:0px;">Add Task</div>
<svg class="a" style="left:545px;top:344px" width="9" height="6" viewBox="-1 -1 9 6"><path d="M0 0.5 L3.5 3.5 L7 0.5" fill="none" stroke="#fff" stroke-width="1.6"/></svg>
<svg class="a" style="left:573px;top:343px" width="9" height="8" viewBox="0 0 9 8"><path d="M0.3 6.2 L4.5 0.5 L8.7 6.2 L7.2 7.6 L4.5 4.2 L1.8 7.6 Z" fill="#4a4a4a"/></svg>
<div class="a" style="left:585px;top:341px;font-size:11px;line-height:11px;color:#333;font-weight:400;font-style:normal;letter-spacing:0px;">Sort</div>
<svg class="a" style="left:611px;top:345px" width="8" height="6" viewBox="-1 -1 8 6"><path d="M0 0.5 L3.0 3.5 L6 0.5" fill="none" stroke="#333" stroke-width="1.4"/></svg>
<svg class="a" style="left:639px;top:342px" width="12" height="10" viewBox="0 0 12 10"><path d="M0 1 H2 M3 1 H11 M2 4 H3.5 M5 4 H11 M4 7 H5 M6.5 7 H11" stroke="#333" stroke-width="1.3"/></svg>
<div class="a" style="left:653px;top:341px;font-size:11px;line-height:11px;color:#333;font-weight:400;font-style:normal;letter-spacing:0px;">Group</div>
<svg class="a" style="left:689px;top:345px" width="8" height="6" viewBox="-1 -1 8 6"><path d="M0 0.5 L3.0 3.5 L6 0.5" fill="none" stroke="#333" stroke-width="1.4"/></svg>
<div class="a" style="left:718px;top:341px;font-size:11px;line-height:11px;color:#333;font-weight:400;font-style:normal;letter-spacing:0px;">Fields</div>
<svg class="a" style="left:752px;top:345px" width="8" height="6" viewBox="-1 -1 8 6"><path d="M0 0.5 L3.0 3.5 L6 0.5" fill="none" stroke="#333" stroke-width="1.4"/></svg>
<div class="a" style="left:781px;top:341px;font-size:11px;line-height:11px;color:#333;font-weight:400;font-style:normal;letter-spacing:0px;">More</div>
<svg class="a" style="left:811px;top:345px" width="8" height="6" viewBox="-1 -1 8 6"><path d="M0 0.5 L3.0 3.5 L6 0.5" fill="none" stroke="#333" stroke-width="1.4"/></svg>
<div class="a" style="left:1103px;top:341px;font-size:11px;line-height:11px;color:#333;font-weight:400;font-style:normal;letter-spacing:0px;">Gantt Display</div>
<svg class="a" style="left:1176px;top:345px" width="8" height="6" viewBox="-1 -1 8 6"><path d="M0 0.5 L3.0 3.5 L6 0.5" fill="none" stroke="#333" stroke-width="1.4"/></svg>
<div class="a" style="left:1205px;top:341px;font-size:11px;line-height:11px;color:#333;font-weight:400;font-style:normal;letter-spacing:0px;">Today</div>
<svg class="a" style="left:1248px;top:342px" width="72" height="14" viewBox="1248 342 72 14"><defs><linearGradient id="kn" x1="0" y1="0" x2="0" y2="1"><stop offset="0" stop-color="#e6e6e6"/><stop offset="1" stop-color="#9a9a9a"/></linearGradient><linearGradient id="ph" x1="0" y1="0" x2="0" y2="1"><stop offset="0" stop-color="#c8c8c8"/><stop offset="1" stop-color="#8a8a8a"/></linearGradient></defs><rect x="1249.5" y="346.5" width="7" height="5.5" fill="url(#ph)" stroke="#222" stroke-width="1"/><circle cx="1253" cy="349" r="1.1" fill="#333"/><rect x="1251.5" y="350" width="3" height="2" fill="#333"/><rect x="1260.5" y="346.5" width="43" height="3.5" rx="1.75" fill="#e2e2e2" stroke="#777" stroke-width="1"/><circle cx="1281.7" cy="348.4" r="4.2" fill="url(#kn)" stroke="#8a8a8a" stroke-width="0.8"/><rect x="1307.7" y="343.7" width="11" height="9.3" fill="url(#ph)" stroke="#222" stroke-width="1.4"/><circle cx="1313.2" cy="346.8" r="1.8" fill="#333"/><path d="M1309.5 352.5 Q1309.5 349 1313.2 349 Q1317 349 1317 352.5 Z" fill="#333"/></svg>
<div class="a" style="left:1335px;top:336px;width:252px;height:23px;border:1px solid #9a9a9a;border-radius:8px;background:#fff"></div>
<svg class="a" style="left:1344px;top:345px" width="10" height="7" viewBox="-1 -1 10 7"><path d="M0 0.5 L4.0 4.5 L8 0.5" fill="none" stroke="#333" stroke-width="1.5"/></svg>
<div class="a" style="left:1365px;top:342px;font-size:11px;line-height:11px;color:#999;font-weight:400;font-style:normal;letter-spacing:0px;">Search Tasks...</div>
<svg class="a" style="left:1571px;top:344px" width="8" height="8" viewBox="0 0 8 8"><path d="M1 1 L7 7 M7 1 L1 7" stroke="#666" stroke-width="1.2"/></svg>
<svg class="a" style="left:1602px;top:341px" width="13" height="14" viewBox="0 0 13 14"><path d="M0.5 0.5 H12.5 L7.5 6 V13.5 L5.5 12 V6 Z" fill="#555"/></svg>
<div class="a" style="left:1620px;top:341px;font-size:11px;line-height:11px;color:#333;font-weight:400;font-style:normal;letter-spacing:0px;">Filter</div>
<svg class="a" style="left:1650px;top:345px" width="9" height="7" viewBox="-1 -1 9 7"><path d="M0 0.5 L3.5 4.5 L7 0.5" fill="none" stroke="#333" stroke-width="1.5"/></svg>
<div class="a" style="left:403px;top:365px;width:246px;height:1px;background:#d8d8d8"></div>
<div class="a" style="left:418px;top:366px;width:231px;height:28px;background:#f0f0f0"></div>
<div class="a" style="left:403px;top:394px;width:246px;height:1px;background:#d8d8d8"></div>
<div class="a" style="left:405px;top:374px;width:11px;height:11px;border:1px solid #c8c8c8;background:#fff"></div>
<div class="a" style="left:424px;top:367.5px;font-size:11px;line-height:11px;color:#444;font-weight:400;font-style:normal;letter-spacing:0px;">Task Name</div>
<div class="a" style="left:601px;top:367.5px;font-size:11px;line-height:11px;color:#444;font-weight:400;font-style:normal;letter-spacing:0px;">Duration</div>
<div class="a" style="left:593px;top:366px;width:1px;height:308px;background:#e2e2e2"></div>
<div class="a" style="left:418px;top:366px;width:1px;height:308px;background:#d8d8d8"></div>
<div class="a" style="left:403px;top:674px;width:246px;height:144px;background:#d3d3d3"></div>
<div class="a" style="left:419px;top:411.37px;width:230px;height:1px;background:#e0e0e0"></div>
<svg class="a" style="left:424px;top:398.30px" width="10" height="10" viewBox="0 0 10 10"><circle cx="5" cy="5" r="5" fill="#585858"/><path d="M2.7 4.6 L4.6 7 L7.6 2.9" fill="none" stroke="#fff" stroke-width="1.7"/></svg>
<div class="a" style="left:439px;top:397.3px;font-size:11.3px;line-height:11.3px;color:#444;font-weight:400;font-style:normal;letter-spacing:0px;text-decoration:underline;text-underline-offset:1px;">Concept Art</div>
<div class="a" style="left:594px;top:397.30px;width:48px;text-align:right;font-size:11.2px;line-height:11px;color:#444">10 days</div>
<div class="a" style="left:419px;top:428.84px;width:230px;height:1px;background:#e0e0e0"></div>
<svg class="a" style="left:424px;top:415.77px" width="10" height="10" viewBox="0 0 10 10"><circle cx="5" cy="5" r="5" fill="#585858"/><path d="M2.7 4.6 L4.6 7 L7.6 2.9" fill="none" stroke="#fff" stroke-width="1.7"/></svg>
<div class="a" style="left:439px;top:414.77px;font-size:11.3px;line-height:11.3px;color:#444;font-weight:400;font-style:normal;letter-spacing:0px;text-decoration:underline;text-underline-offset:1px;">Set Design</div>
<div class="a" style="left:594px;top:414.77px;width:48px;text-align:right;font-size:11.2px;line-height:11px;color:#444">15 days</div>
<div class="a" style="left:419px;top:446.31px;width:230px;height:1px;background:#e0e0e0"></div>
<svg class="a" style="left:424px;top:433.24px" width="10" height="10" viewBox="0 0 10 10"><circle cx="5" cy="5" r="5" fill="#585858"/><path d="M2.7 4.6 L4.6 7 L7.6 2.9" fill="none" stroke="#fff" stroke-width="1.7"/></svg>
<div class="a" style="left:439px;top:432.24px;font-size:11.3px;line-height:11.3px;color:#444;font-weight:400;font-style:normal;letter-spacing:0px;text-decoration:underline;text-underline-offset:1px;">Prop Design</div>
<div class="a" style="left:594px;top:432.24px;width:48px;text-align:right;font-size:11.2px;line-height:11px;color:#444">20 days</div>
<div class="a" style="left:419px;top:463.78px;width:230px;height:1px;background:#e0e0e0"></div>
<svg class="a" style="left:424px;top:450.71px" width="10" height="10" viewBox="0 0 10 10"><circle cx="5" cy="5" r="5" fill="#585858"/><path d="M2.7 4.6 L4.6 7 L7.6 2.9" fill="none" stroke="#fff" stroke-width="1.7"/></svg>
<div class="a" style="left:439px;top:449.71000000000004px;font-size:11.3px;line-height:11.3px;color:#444;font-weight:400;font-style:normal;letter-spacing:0px;text-decoration:underline;text-underline-offset:1px;">Graphic Design</div>
<div class="a" style="left:594px;top:449.71px;width:48px;text-align:right;font-size:11.2px;line-height:11px;color:#444">15 days</div>
<div class="a" style="left:419px;top:481.25px;width:230px;height:1px;background:#e0e0e0"></div>
<svg class="a" style="left:424px;top:468.18px" width="10" height="10" viewBox="0 0 10 10"><circle cx="5" cy="5" r="5" fill="#585858"/><path d="M2.7 4.6 L4.6 7 L7.6 2.9" fill="none" stroke="#fff" stroke-width="1.7"/></svg>
<div class="a" style="left:439px;top:467.18px;font-size:11.3px;line-height:11.3px;color:#444;font-weight:400;font-style:normal;letter-spacing:0px;text-decoration:underline;text-underline-offset:1px;">Build Bible</div>
<div class="a" style="left:594px;top:467.18px;width:48px;text-align:right;font-size:11.2px;line-height:11px;color:#444">10 days</div>
<div class="a" style="left:419px;top:498.72px;width:230px;height:1px;background:#e0e0e0"></div>
<svg class="a" style="left:424px;top:485.65px" width="10" height="10" viewBox="0 0 10 10"><circle cx="5" cy="5" r="5" fill="#585858"/><path d="M2.7 4.6 L4.6 7 L7.6 2.9" fill="none" stroke="#fff" stroke-width="1.7"/></svg>
<div class="a" style="left:439px;top:484.65px;font-size:11.3px;line-height:11.3px;color:#3d37a4;font-weight:400;font-style:normal;letter-spacing:0px;text-decoration:underline;text-underline-offset:1px;">Tech Check</div>
<div class="a" style="left:594px;top:484.65px;width:48px;text-align:right;font-size:11.2px;line-height:11px;color:#3d37a4">0 days</div>
<div class="a" style="left:419px;top:516.19px;width:230px;height:1px;background:#e0e0e0"></div>
<svg class="a" style="left:424px;top:503.12px" width="10" height="10" viewBox="0 0 10 10"><circle cx="5" cy="5" r="5" fill="#585858"/><path d="M2.7 4.6 L4.6 7 L7.6 2.9" fill="none" stroke="#fff" stroke-width="1.7"/></svg>
<div class="a" style="left:439px;top:502.12px;font-size:11.3px;line-height:11.3px;color:#444;font-weight:400;font-style:normal;letter-spacing:0px;text-decoration:underline;text-underline-offset:1px;">Prop Fabrication</div>
<div class="a" style="left:594px;top:502.12px;width:48px;text-align:right;font-size:11.2px;line-height:11px;color:#444">50 days</div>
<div class="a" style="left:419px;top:533.66px;width:230px;height:1px;background:#e0e0e0"></div>
<svg class="a" style="left:424px;top:520.59px" width="10" height="10" viewBox="0 0 10 10"><circle cx="5" cy="5" r="5" fill="#585858"/><path d="M2.7 4.6 L4.6 7 L7.6 2.9" fill="none" stroke="#fff" stroke-width="1.7"/></svg>
<div class="a" style="left:439px;top:519.59px;font-size:11.3px;line-height:11.3px;color:#444;font-weight:400;font-style:normal;letter-spacing:0px;text-decoration:underline;text-underline-offset:1px;">Set Fabrication</div>
<div class="a" style="left:594px;top:519.59px;width:48px;text-align:right;font-size:11.2px;line-height:11px;color:#444">30 days</div>
<div class="a" style="left:419px;top:551.13px;width:230px;height:1px;background:#e0e0e0"></div>
<svg class="a" style="left:424px;top:538.06px" width="10" height="10" viewBox="0 0 10 10"><circle cx="5" cy="5" r="5" fill="#585858"/><path d="M2.7 4.6 L4.6 7 L7.6 2.9" fill="none" stroke="#fff" stroke-width="1.7"/></svg>
<div class="a" style="left:439px;top:537.06px;font-size:11.3px;line-height:11.3px;color:#444;font-weight:400;font-style:normal;letter-spacing:0px;text-decoration:underline;text-underline-offset:1px;">Landscapes</div>
<div class="a" style="left:594px;top:537.06px;width:48px;text-align:right;font-size:11.2px;line-height:11px;color:#444">60 days</div>
<div class="a" style="left:419px;top:568.60px;width:230px;height:1px;background:#e0e0e0"></div>
<svg class="a" style="left:424px;top:555.53px" width="10" height="10" viewBox="0 0 10 10"><circle cx="5" cy="5" r="5" fill="#585858"/><path d="M2.7 4.6 L4.6 7 L7.6 2.9" fill="none" stroke="#fff" stroke-width="1.7"/></svg>
<div class="a" style="left:439px;top:554.53px;font-size:11.3px;line-height:11.3px;color:#3d37a4;font-weight:400;font-style:normal;letter-spacing:0px;text-decoration:underline;text-underline-offset:1px;">Shop Launch</div>
<div class="a" style="left:594px;top:554.53px;width:48px;text-align:right;font-size:11.2px;line-height:11px;color:#3d37a4">0 days</div>
<div class="a" style="left:419px;top:586.07px;width:230px;height:1px;background:#e0e0e0"></div>
<svg class="a" style="left:424px;top:573.00px" width="10" height="10" viewBox="0 0 10 10"><circle cx="5" cy="5" r="5" fill="#585858"/><path d="M2.7 4.6 L4.6 7 L7.6 2.9" fill="none" stroke="#fff" stroke-width="1.7"/></svg>
<div class="a" style="left:439px;top:572.0px;font-size:11.3px;line-height:11.3px;color:#444;font-weight:400;font-style:normal;letter-spacing:0px;text-decoration:underline;text-underline-offset:1px;">Set Paint</div>
<div class="a" style="left:594px;top:572.00px;width:48px;text-align:right;font-size:11.2px;line-height:11px;color:#444">50 days</div>
<div class="a" style="left:419px;top:603.54px;width:230px;height:1px;background:#e0e0e0"></div>
<svg class="a" style="left:424px;top:590.47px" width="10" height="10" viewBox="0 0 10 10"><circle cx="5" cy="5" r="5" fill="#585858"/><path d="M2.7 4.6 L4.6 7 L7.6 2.9" fill="none" stroke="#fff" stroke-width="1.7"/></svg>
<div class="a" style="left:439px;top:589.47px;font-size:11.3px;line-height:11.3px;color:#3d37a4;font-weight:400;font-style:normal;letter-spacing:0px;text-decoration:underline;text-underline-offset:1px;">Mid Build Review</div>
<div class="a" style="left:594px;top:589.47px;width:48px;text-align:right;font-size:11.2px;line-height:11px;color:#3d37a4">0 days</div>
<div class="a" style="left:419px;top:621.01px;width:230px;height:1px;background:#e0e0e0"></div>
<svg class="a" style="left:424px;top:607.94px" width="10" height="10" viewBox="0 0 10 10"><circle cx="5" cy="5" r="5" fill="#585858"/><path d="M2.7 4.6 L4.6 7 L7.6 2.9" fill="none" stroke="#fff" stroke-width="1.7"/></svg>
<div class="a" style="left:439px;top:606.94px;font-size:11.3px;line-height:11.3px;color:#444;font-weight:400;font-style:normal;letter-spacing:0px;text-decoration:underline;text-underline-offset:1px;">Assembly</div>
<div class="a" style="left:594px;top:606.94px;width:48px;text-align:right;font-size:11.2px;line-height:11px;color:#444">5 days</div>
<div class="a" style="left:419px;top:638.48px;width:230px;height:1px;background:#e0e0e0"></div>
<svg class="a" style="left:424px;top:625.41px" width="10" height="10" viewBox="0 0 10 10"><circle cx="5" cy="5" r="5" fill="#585858"/><path d="M2.7 4.6 L4.6 7 L7.6 2.9" fill="none" stroke="#fff" stroke-width="1.7"/></svg>
<div class="a" style="left:439px;top:624.41px;font-size:11.3px;line-height:11.3px;color:#444;font-weight:400;font-style:normal;letter-spacing:0px;text-decoration:underline;text-underline-offset:1px;transform:scaleX(0.88);transform-origin:0 0;">OSV</div>
<div class="a" style="left:594px;top:624.41px;width:48px;text-align:right;font-size:11.2px;line-height:11px;color:#444">10 days</div>
<div class="a" style="left:419px;top:655.95px;width:230px;height:1px;background:#e0e0e0"></div>
<svg class="a" style="left:424px;top:642.88px" width="10" height="10" viewBox="0 0 10 10"><circle cx="5" cy="5" r="5" fill="#585858"/><path d="M2.7 4.6 L4.6 7 L7.6 2.9" fill="none" stroke="#fff" stroke-width="1.7"/></svg>
<div class="a" style="left:439px;top:641.88px;font-size:11.3px;line-height:11.3px;color:#444;font-weight:400;font-style:normal;letter-spacing:0px;text-decoration:underline;text-underline-offset:1px;">Dressing</div>
<div class="a" style="left:594px;top:641.88px;width:48px;text-align:right;font-size:11.2px;line-height:11px;color:#444">15 days</div>
<div class="a" style="left:419px;top:673.42px;width:230px;height:1px;background:#e0e0e0"></div>
<svg class="a" style="left:424px;top:660.35px" width="10" height="10" viewBox="0 0 10 10"><circle cx="5" cy="5" r="5" fill="#585858"/><path d="M2.7 4.6 L4.6 7 L7.6 2.9" fill="none" stroke="#fff" stroke-width="1.7"/></svg>
<div class="a" style="left:439px;top:659.3499999999999px;font-size:11.3px;line-height:11.3px;color:#3d37a4;font-weight:400;font-style:normal;letter-spacing:0px;text-decoration:underline;text-underline-offset:1px;transform:scaleX(0.88);transform-origin:0 0;">SET DELIVERY</div>
<div class="a" style="left:594px;top:659.35px;width:48px;text-align:right;font-size:11.2px;line-height:11px;color:#3d37a4">0 days</div>
<div class="a" style="left:649px;top:365px;width:11px;height:453px;background:#f0f0f0;border-left:1px solid #e4e4e4;border-right:1px solid #d4d4d4"></div>
<svg class="a" style="left:652px;top:603px" width="5" height="9" viewBox="0 0 5 9"><path d="M1 0 V9 M4 0 V9" stroke="#555" stroke-width="1"/></svg>
<svg class="a" style="left:659px;top:365px" width="1018" height="453" viewBox="659 365 1018 453"><rect x="659" y="365" width="1018" height="453" fill="#f3f3f3"/><rect x="659.6" y="365.5" width="1018" height="13.899999999999977" fill="#fff"/><line x1="659" y1="365.5" x2="1677" y2="365.5" stroke="#d6d6d6" stroke-width="1"/><line x1="659" y1="379.4" x2="1677" y2="379.4" stroke="#dcdcdc" stroke-width="1"/><text x="671.9" y="390.9" font-family="Liberation Sans" font-size="10.5" fill="#444" text-anchor="middle">13</text><line x1="688.5" y1="379.4" x2="688.5" y2="818" stroke="#e0e0e0" stroke-width="1"/><text x="703.5" y="390.9" font-family="Liberation Sans" font-size="10.5" fill="#444" text-anchor="middle">20</text><line x1="720.5" y1="379.4" x2="720.5" y2="818" stroke="#e0e0e0" stroke-width="1"/><text x="735.0" y="390.9" font-family="Liberation Sans" font-size="10.5" fill="#444" text-anchor="middle">27</text><line x1="751.5" y1="379.4" x2="751.5" y2="818" stroke="#e0e0e0" stroke-width="1"/><text x="766.6" y="390.9" font-family="Liberation Sans" font-size="10.5" fill="#444" text-anchor="middle">03</text><line x1="783.5" y1="379.4" x2="783.5" y2="818" stroke="#e0e0e0" stroke-width="1"/><text x="798.1" y="390.9" font-family="Liberation Sans" font-size="10.5" fill="#444" text-anchor="middle">10</text><line x1="814.5" y1="379.4" x2="814.5" y2="818" stroke="#e0e0e0" stroke-width="1"/><text x="829.6" y="390.9" font-family="Liberation Sans" font-size="10.5" fill="#444" text-anchor="middle">17</text><line x1="846.5" y1="379.4" x2="846.5" y2="818" stroke="#e0e0e0" stroke-width="1"/><text x="861.2" y="390.9" font-family="Liberation Sans" font-size="10.5" fill="#444" text-anchor="middle">24</text><line x1="877.5" y1="379.4" x2="877.5" y2="818" stroke="#e0e0e0" stroke-width="1"/><text x="892.7" y="390.9" font-family="Liberation Sans" font-size="10.5" fill="#444" text-anchor="middle">31</text><line x1="909.5" y1="379.4" x2="909.5" y2="818" stroke="#e0e0e0" stroke-width="1"/><text x="924.3" y="390.9" font-family="Liberation Sans" font-size="10.5" fill="#444" text-anchor="middle">07</text><line x1="941.5" y1="379.4" x2="941.5" y2="818" stroke="#e0e0e0" stroke-width="1"/><text x="955.8" y="390.9" font-family="Liberation Sans" font-size="10.5" fill="#444" text-anchor="middle">14</text><line x1="972.5" y1="379.4" x2="972.5" y2="818" stroke="#e0e0e0" stroke-width="1"/><text x="987.4" y="390.9" font-family="Liberation Sans" font-size="10.5" fill="#444" text-anchor="middle">21</text><line x1="1004.5" y1="379.4" x2="1004.5" y2="818" stroke="#e0e0e0" stroke-width="1"/><text x="1018.9" y="390.9" font-family="Liberation Sans" font-size="10.5" fill="#444" text-anchor="middle">28</text><line x1="1035.5" y1="379.4" x2="1035.5" y2="818" stroke="#e0e0e0" stroke-width="1"/><text x="1050.5" y="390.9" font-family="Liberation Sans" font-size="10.5" fill="#444" text-anchor="middle">07</text><line x1="1067.5" y1="379.4" x2="1067.5" y2="818" stroke="#e0e0e0" stroke-width="1"/><text x="1082.0" y="390.9" font-family="Liberation Sans" font-size="10.5" fill="#444" text-anchor="middle">14</text><line x1="1098.5" y1="379.4" x2="1098.5" y2="818" stroke="#e0e0e0" stroke-width="1"/><text x="1113.6" y="390.9" font-family="Liberation Sans" font-size="10.5" fill="#444" text-anchor="middle">21</text><line x1="1130.5" y1="379.4" x2="1130.5" y2="818" stroke="#e0e0e0" stroke-width="1"/><text x="1145.1" y="390.9" font-family="Liberation Sans" font-size="10.5" fill="#444" text-anchor="middle">28</text><line x1="1161.5" y1="379.4" x2="1161.5" y2="818" stroke="#e0e0e0" stroke-width="1"/><text x="1176.6" y="390.9" font-family="Liberation Sans" font-size="10.5" fill="#444" text-anchor="middle">04</text><line x1="1193.5" y1="379.4" x2="1193.5" y2="818" stroke="#e0e0e0" stroke-width="1"/><text x="1208.2" y="390.9" font-family="Liberation Sans" font-size="10.5" fill="#444" text-anchor="middle">11</text><line x1="1224.5" y1="379.4" x2="1224.5" y2="818" stroke="#e0e0e0" stroke-width="1"/><text x="1239.7" y="390.9" font-family="Liberation Sans" font-size="10.5" fill="#444" text-anchor="middle">18</text><line x1="1256.5" y1="379.4" x2="1256.5" y2="818" stroke="#e0e0e0" stroke-width="1"/><text x="1271.3" y="390.9" font-family="Liberation Sans" font-size="10.5" fill="#444" text-anchor="middle">25</text><line x1="1288.5" y1="379.4" x2="1288.5" y2="818" stroke="#e0e0e0" stroke-width="1"/><text x="1302.8" y="390.9" font-family="Liberation Sans" font-size="10.5" fill="#444" text-anchor="middle">02</text><line x1="1319.5" y1="379.4" x2="1319.5" y2="818" stroke="#e0e0e0" stroke-width="1"/><text x="1334.4" y="390.9" font-family="Liberation Sans" font-size="10.5" fill="#444" text-anchor="middle">09</text><line x1="1351.5" y1="379.4" x2="1351.5" y2="818" stroke="#e0e0e0" stroke-width="1"/><text x="1365.9" y="390.9" font-family="Liberation Sans" font-size="10.5" fill="#444" text-anchor="middle">16</text><line x1="1382.5" y1="379.4" x2="1382.5" y2="818" stroke="#e0e0e0" stroke-width="1"/><text x="1397.5" y="390.9" font-family="Liberation Sans" font-size="10.5" fill="#444" text-anchor="middle">23</text><line x1="1414.5" y1="379.4" x2="1414.5" y2="818" stroke="#e0e0e0" stroke-width="1"/><text x="1429.0" y="390.9" font-family="Liberation Sans" font-size="10.5" fill="#444" text-anchor="middle">30</text><line x1="1445.5" y1="379.4" x2="1445.5" y2="818" stroke="#e0e0e0" stroke-width="1"/><text x="1460.5" y="390.9" font-family="Liberation Sans" font-size="10.5" fill="#444" text-anchor="middle">06</text><line x1="1477.5" y1="379.4" x2="1477.5" y2="818" stroke="#e0e0e0" stroke-width="1"/><text x="1492.1" y="390.9" font-family="Liberation Sans" font-size="10.5" fill="#444" text-anchor="middle">13</text><line x1="1508.5" y1="379.4" x2="1508.5" y2="818" stroke="#e0e0e0" stroke-width="1"/><text x="1523.6" y="390.9" font-family="Liberation Sans" font-size="10.5" fill="#444" text-anchor="middle">20</text><line x1="1540.5" y1="379.4" x2="1540.5" y2="818" stroke="#e0e0e0" stroke-width="1"/><text x="1555.2" y="390.9" font-family="Liberation Sans" font-size="10.5" fill="#444" text-anchor="middle">27</text><line x1="1571.5" y1="379.4" x2="1571.5" y2="818" stroke="#e0e0e0" stroke-width="1"/><text x="1586.7" y="390.9" font-family="Liberation Sans" font-size="10.5" fill="#444" text-anchor="middle">04</text><line x1="1603.5" y1="379.4" x2="1603.5" y2="818" stroke="#e0e0e0" stroke-width="1"/><text x="1618.3" y="390.9" font-family="Liberation Sans" font-size="10.5" fill="#444" text-anchor="middle">11</text><line x1="1635.5" y1="379.4" x2="1635.5" y2="818" stroke="#e0e0e0" stroke-width="1"/><text x="1649.8" y="390.9" font-family="Liberation Sans" font-size="10.5" fill="#444" text-anchor="middle">18</text><line x1="1666.5" y1="379.4" x2="1666.5" y2="818" stroke="#e0e0e0" stroke-width="1"/><text x="1681.4" y="390.9" font-family="Liberation Sans" font-size="10.5" fill="#444" text-anchor="middle">25</text><line x1="742.8" y1="365.5" x2="742.8" y2="379.4" stroke="#dcdcdc" stroke-width="1"/><line x1="882.5" y1="365.5" x2="882.5" y2="379.4" stroke="#dcdcdc" stroke-width="1"/><line x1="1008.7" y1="365.5" x2="1008.7" y2="379.4" stroke="#dcdcdc" stroke-width="1"/><line x1="1148.4" y1="365.5" x2="1148.4" y2="379.4" stroke="#dcdcdc" stroke-width="1"/><line x1="1283.5" y1="365.5" x2="1283.5" y2="379.4" stroke="#dcdcdc" stroke-width="1"/><line x1="1423.2" y1="365.5" x2="1423.2" y2="379.4" stroke="#dcdcdc" stroke-width="1"/><line x1="1558.4" y1="365.5" x2="1558.4" y2="379.4" stroke="#dcdcdc" stroke-width="1"/><text x="694.4" y="376.5" font-family="Liberation Sans" font-size="10.5" fill="#444" text-anchor="middle">Dec 21</text><text x="811.5" y="376.5" font-family="Liberation Sans" font-size="10.5" fill="#444" text-anchor="middle">Jan 22</text><text x="944.9" y="376.5" font-family="Liberation Sans" font-size="10.5" fill="#444" text-anchor="middle">Feb 22</text><text x="1077.5" y="376.5" font-family="Liberation Sans" font-size="10.5" fill="#444" text-anchor="middle">Mar 22</text><text x="1214.5" y="376.5" font-family="Liberation Sans" font-size="10.5" fill="#444" text-anchor="middle">Apr 22</text><text x="1352" y="376.5" font-family="Liberation Sans" font-size="10.5" fill="#444" text-anchor="middle">May 22</text><text x="1489.5" y="376.5" font-family="Liberation Sans" font-size="10.5" fill="#444" text-anchor="middle">Jun 22</text><text x="1620.2" y="376.5" font-family="Liberation Sans" font-size="10.5" fill="#444" text-anchor="middle">Jul 22</text><line x1="659" y1="394.5" x2="1677" y2="394.5" stroke="#e0e0e0" stroke-width="1"/><line x1="659" y1="411.5" x2="1677" y2="411.5" stroke="#e0e0e0" stroke-width="1"/><line x1="659" y1="429.5" x2="1677" y2="429.5" stroke="#e0e0e0" stroke-width="1"/><line x1="659" y1="446.5" x2="1677" y2="446.5" stroke="#e0e0e0" stroke-width="1"/><line x1="659" y1="464.5" x2="1677" y2="464.5" stroke="#e0e0e0" stroke-width="1"/><line x1="659" y1="481.5" x2="1677" y2="481.5" stroke="#e0e0e0" stroke-width="1"/><line x1="659" y1="499.5" x2="1677" y2="499.5" stroke="#e0e0e0" stroke-width="1"/><line x1="659" y1="516.5" x2="1677" y2="516.5" stroke="#e0e0e0" stroke-width="1"/><line x1="659" y1="533.5" x2="1677" y2="533.5" stroke="#e0e0e0" stroke-width="1"/><line x1="659" y1="551.5" x2="1677" y2="551.5" stroke="#e0e0e0" stroke-width="1"/><line x1="659" y1="568.5" x2="1677" y2="568.5" stroke="#e0e0e0" stroke-width="1"/><line x1="659" y1="586.5" x2="1677" y2="586.5" stroke="#e0e0e0" stroke-width="1"/><line x1="659" y1="603.5" x2="1677" y2="603.5" stroke="#e0e0e0" stroke-width="1"/><line x1="659" y1="620.5" x2="1677" y2="620.5" stroke="#e0e0e0" stroke-width="1"/><line x1="659" y1="638.5" x2="1677" y2="638.5" stroke="#e0e0e0" stroke-width="1"/><line x1="659" y1="655.5" x2="1677" y2="655.5" stroke="#e0e0e0" stroke-width="1"/><line x1="659" y1="673.5" x2="1677" y2="673.5" stroke="#e0e0e0" stroke-width="1"/><line x1="659.6" y1="365.5" x2="659.6" y2="818" stroke="#d0d0d0" stroke-width="1"/><rect x="751.8" y="398.5" width="54.1" height="11" fill="#1a1a1a" stroke="#111" stroke-width="1.2"/><text x="735.3" y="408.0" font-family="Liberation Sans" font-size="10.3" fill="#555" text-anchor="end">Concept Art</text><text x="820.9" y="408.0" font-family="Liberation Sans" font-size="10.3" fill="#555">10 days</text><rect x="814.9" y="415.9" width="85.6" height="11" fill="#5c5c5c" stroke="#444" stroke-width="1.2"/><text x="798.4" y="425.4" font-family="Liberation Sans" font-size="10.3" fill="#555" text-anchor="end">Set Design</text><text x="915.5" y="425.4" font-family="Liberation Sans" font-size="10.3" fill="#555">15 days</text><rect x="814.9" y="433.3" width="117.2" height="11" fill="#b4b4b4" stroke="#555" stroke-width="1.2"/><text x="798.4" y="442.8" font-family="Liberation Sans" font-size="10.3" fill="#555" text-anchor="end">Prop Design</text><text x="947.0" y="442.8" font-family="Liberation Sans" font-size="10.3" fill="#555">20 days</text><rect x="814.9" y="450.8" width="85.6" height="11" fill="#b4b4b4" stroke="#555" stroke-width="1.2"/><text x="798.4" y="460.3" font-family="Liberation Sans" font-size="10.3" fill="#555" text-anchor="end">Graphic Design</text><text x="915.5" y="460.3" font-family="Liberation Sans" font-size="10.3" fill="#555">15 days</text><rect x="909.5" y="468.2" width="54.1" height="11" fill="#e9e9e9" stroke="#666" stroke-width="1.2"/><text x="893.0" y="477.7" font-family="Liberation Sans" font-size="10.3" fill="#555" text-anchor="end">Build Bible</text><text x="978.6" y="477.7" font-family="Liberation Sans" font-size="10.3" fill="#555">10 days</text><rect x="972.6" y="503.0" width="306.4" height="11" fill="#f21ef2" stroke="#a616a6" stroke-width="1.2"/><text x="956.1" y="512.5" font-family="Liberation Sans" font-size="10.3" fill="#555" text-anchor="end">Prop Fabrication</text><text x="1294.0" y="512.5" font-family="Liberation Sans" font-size="10.3" fill="#555">50 days</text><rect x="972.6" y="520.4" width="180.3" height="11" fill="#f8f83c" stroke="#8e8e22" stroke-width="1.2"/><text x="956.1" y="529.9" font-family="Liberation Sans" font-size="10.3" fill="#555" text-anchor="end">Set Fabrication</text><text x="1167.9" y="529.9" font-family="Liberation Sans" font-size="10.3" fill="#555">30 days</text><rect x="972.6" y="537.9" width="369.5" height="11" fill="#3cb42a" stroke="#21701a" stroke-width="1.2"/><text x="956.1" y="547.4" font-family="Liberation Sans" font-size="10.3" fill="#555" text-anchor="end">Landscapes</text><text x="1357.1" y="547.4" font-family="Liberation Sans" font-size="10.3" fill="#555">60 days</text><rect x="1035.7" y="572.7" width="306.4" height="11" fill="#1c1ce6" stroke="#1212a0" stroke-width="1.2"/><text x="1019.2" y="582.2" font-family="Liberation Sans" font-size="10.3" fill="#555" text-anchor="end">Set Paint</text><text x="1357.1" y="582.2" font-family="Liberation Sans" font-size="10.3" fill="#555">50 days</text><rect x="1351.1" y="607.5" width="22.5" height="11" fill="#f8f83c" stroke="#8e8e22" stroke-width="1.2"/><text x="1334.6" y="617.0" font-family="Liberation Sans" font-size="10.3" fill="#555" text-anchor="end">Assembly</text><text x="1388.7" y="617.0" font-family="Liberation Sans" font-size="10.3" fill="#555">5 days</text><rect x="1382.7" y="625.0" width="54.1" height="11" fill="#1a1a1a" stroke="#111" stroke-width="1.2"/><text x="1366.2" y="634.5" font-family="Liberation Sans" font-size="10.3" fill="#555" text-anchor="end">OSV</text><text x="1451.8" y="634.5" font-family="Liberation Sans" font-size="10.3" fill="#555">10 days</text><rect x="1445.8" y="642.4" width="85.6" height="11" fill="#d42a1c" stroke="#8a1a10" stroke-width="1.2"/><text x="1429.3" y="651.9" font-family="Liberation Sans" font-size="10.3" fill="#555" text-anchor="end">Dressing</text><text x="1546.4" y="651.9" font-family="Liberation Sans" font-size="10.3" fill="#555">15 days</text><path d="M910.5 484.20000000000005 L917.2 490.90000000000003 L910.5 497.6 L903.8 490.90000000000003 Z" fill="#2424c4" stroke="#14148a" stroke-width="1.1"/><text x="897.5" y="494.9" font-family="Liberation Sans" font-size="10.3" fill="#555" text-anchor="end">Tech Check</text><text x="924.0" y="494.9" font-family="Liberation Sans" font-size="10.3" fill="#555">0 days</text><path d="M973.4 553.8799999999999 L980.1 560.5799999999999 L973.4 567.28 L966.6999999999999 560.5799999999999 Z" fill="#4cc83c" stroke="#2a8a2a" stroke-width="1.1"/><text x="960.4" y="564.6" font-family="Liberation Sans" font-size="10.3" fill="#555" text-anchor="end">Shop Launch</text><text x="986.9" y="564.6" font-family="Liberation Sans" font-size="10.3" fill="#555">0 days</text><path d="M1072.7 588.7199999999999 L1079.4 595.42 L1072.7 602.12 L1066.0 595.42 Z" fill="#e8602a" stroke="#8a3a1a" stroke-width="1.1"/><text x="1059.7" y="599.4" font-family="Liberation Sans" font-size="10.3" fill="#555" text-anchor="end">Mid Build Review</text><text x="1086.2" y="599.4" font-family="Liberation Sans" font-size="10.3" fill="#555">0 days</text><path d="M1531 658.3999999999999 L1537.7 665.0999999999999 L1531 671.8 L1524.3 665.0999999999999 Z" fill="#e8602a" stroke="#8a3a1a" stroke-width="1.1"/><text x="1518.0" y="669.1" font-family="Liberation Sans" font-size="10.3" fill="#555" text-anchor="end" textLength="65" lengthAdjust="spacingAndGlyphs">SET DELIVERY</text><text x="1544.5" y="669.1" font-family="Liberation Sans" font-size="10.3" fill="#555">0 days</text><path d="M805.9 404.5 V413.4 H811.9 V421.4 H814.9" fill="none" stroke="#7a7a7a" stroke-width="1"/><path d="M805.9 404.5 V430.8 H811.9 V438.8 H814.9" fill="none" stroke="#7a7a7a" stroke-width="1"/><path d="M805.9 404.5 V448.3 H811.9 V456.3 H814.9" fill="none" stroke="#7a7a7a" stroke-width="1"/><path d="M900.5 421.9 V482.7 H906.4 V473.7 H909.5" fill="none" stroke="#7a7a7a" stroke-width="1"/><path d="M906.4 481.5 H914.7 V485.5" fill="none" stroke="#7a7a7a" stroke-width="1"/><path d="M963.6 479 V552.2 H969.7 V556" fill="none" stroke="#7a7a7a" stroke-width="1"/><path d="M972.6 508.5 H969.7 V515.4 H977.5" fill="none" stroke="#7a7a7a" stroke-width="1"/><path d="M972.6 525.9 H969.7 V532.9 H977.5" fill="none" stroke="#7a7a7a" stroke-width="1"/><path d="M972.6 543.4 H969.7 V550.3 H977.5" fill="none" stroke="#7a7a7a" stroke-width="1"/><path d="M977.5 516 V586.3 H1068.5 V590" fill="none" stroke="#7a7a7a" stroke-width="1"/><path d="M977.5 569.6 H1032.2 V578 H1034.7" fill="none" stroke="#7a7a7a" stroke-width="1"/><path d="M1342.1 543.9 V572.7" fill="none" stroke="#7a7a7a" stroke-width="1"/><path d="M1342.1 578.7 V605.0 H1348.1 V613.0 H1351.1" fill="none" stroke="#7a7a7a" stroke-width="1"/><path d="M1373.7 613.5 V622.5 H1379.7 V630.5 H1382.7" fill="none" stroke="#7a7a7a" stroke-width="1"/><path d="M1436.8 631.0 V639.9 H1442.8 V647.9 H1445.8" fill="none" stroke="#7a7a7a" stroke-width="1"/><path d="M1531.4 648.4 V658.8" fill="none" stroke="#7a7a7a" stroke-width="1"/></svg>
</body></html>
